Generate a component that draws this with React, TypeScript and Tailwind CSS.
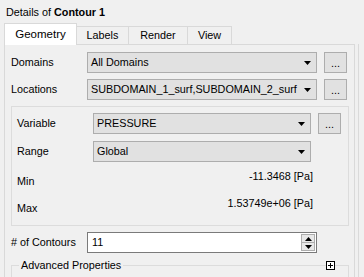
import React from "react";

const Arrow = () => (
  <svg width="7" height="4" viewBox="0 0 7 4" className="block">
    <path d="M0 0H7L3.5 4Z" fill="#000" />
  </svg>
);

function Combo({ text, w }: { text: string; w: string }) {
  return (
    <div
      className={`${w} h-[21px] flex items-center justify-between border border-[#adadad] bg-[#e1e1e1] pl-[3px] pr-[5px]`}
    >
      <span className="whitespace-nowrap">{text}</span>
      <Arrow />
    </div>
  );
}

function Dots() {
  return (
    <div className="w-[23px] h-[21px] border border-[#adadad] bg-[#e1e1e1] flex items-end justify-center pb-[3px] leading-none">
      ...
    </div>
  );
}

export default function App() {
  return (
    <div className="w-[364px] h-[277px] overflow-hidden bg-[#f0f0f0] text-black font-['Liberation_Sans',Arial,sans-serif] text-[10.8px] leading-[13px]">
      {/* title */}
      <div className="h-[23px] flex items-center pl-[6px] pt-[1px]">
        <span>Details of&nbsp;</span>
        <span className="font-bold">Contour 1</span>
      </div>
      {/* tabs */}
      <div className="h-[21px] flex items-end pl-[4px]">
        <div className="relative z-10 -mb-px h-[22px] w-[73px] bg-white border-l border-t border-r border-[#d9d9d9] flex items-center justify-center text-[11.5px]">
          Geometry
        </div>
        <div className="h-[18px] w-[52px] border-t border-r border-[#d9d9d9] flex items-center justify-center">
          Labels
        </div>
        <div className="h-[18px] w-[59px] border-t border-r border-[#d9d9d9] flex items-center justify-center">
          Render
        </div>
        <div className="h-[18px] w-[44px] border-t border-r border-[#d9d9d9] flex items-center justify-center">
          View
        </div>
      </div>
      <div className="flex pl-[4px]">
        {/* panel */}
        <div className="w-[351px] h-[240px] border border-[#d9d9d9] pt-[7px] pl-[6px] flex flex-col">
          <div className="flex items-center h-[21px]">
            <div className="w-[76px]">Domains</div>
            <Combo text="All Domains" w="w-[230px]" />
            <div className="ml-[7px]">
              <Dots />
            </div>
          </div>
          <div className="flex items-center h-[21px] mt-[6px]">
            <div className="w-[76px]">Locations</div>
            <Combo text="SUBDOMAIN_1_surf,SUBDOMAIN_2_surf" w="w-[230px]" />
            <div className="ml-[7px]">
              <Dots />
            </div>
          </div>
          {/* group box */}
          <div className="mt-[6px] w-[338px] h-[120px] border border-[#dcdcdc] pl-[5px] pt-[6px] flex flex-col">
            <div className="flex items-center h-[21px]">
              <div className="w-[76px]">Variable</div>
              <Combo text="PRESSURE" w="w-[218px]" />
              <div className="ml-[7px]">
                <Dots />
              </div>
            </div>
            <div className="flex items-center h-[21px] mt-[7px]">
              <div className="w-[76px]">Range</div>
              <Combo text="Global" w="w-[218px]" />
            </div>
            <div className="flex justify-between h-[18px] mt-[8px] w-[296px]">
              <div className="self-end">Min</div>
              <div className="self-start">-11.3468 [Pa]</div>
            </div>
            <div className="flex justify-between h-[18px] mt-[9px] w-[296px]">
              <div className="self-end">Max</div>
              <div className="self-start">1.53749e+06 [Pa]</div>
            </div>
          </div>
          {/* # of contours */}
          <div className="flex items-center h-[21px] mt-[6px]">
            <div className="w-[76px]"># of Contours</div>
            <div className="w-[230px] h-[21px] border border-[#7a7a7a] bg-white flex items-center justify-between pl-[4px] pr-[1px]">
              <span>11</span>
              <div className="w-[14px] h-[17px] flex flex-col border border-[#adadad] bg-[#e8e8e8]">
                <div className="flex-1 flex items-center justify-center border-b border-[#adadad]">
                  <svg width="7" height="4" viewBox="0 0 7 4" className="block">
                    <path d="M0 4H7L3.5 0Z" fill="#000" />
                  </svg>
                </div>
                <div className="flex-1 flex items-center justify-center">
                  <Arrow />
                </div>
              </div>
            </div>
          </div>
          {/* advanced properties */}
          <div className="relative mt-[12px] w-[338px] flex-1 border-t border-l border-r border-[#dcdcdc]">
            <div className="absolute -top-[7px] left-[7px] bg-[#f0f0f0] px-[2px] leading-[13px]">
              Advanced Properties
            </div>
            <div className="absolute -top-[5px] right-[13px] w-[9px] h-[9px] border border-black bg-white flex items-center justify-center">
              <svg width="7" height="7" viewBox="0 0 7 7" className="block">
                <path d="M1 3.5H6M3.5 1V6" stroke="#000" strokeWidth="1" />
              </svg>
            </div>
          </div>
        </div>
        <div className="ml-[3px] w-px h-[240px] bg-[#dadada]" />
      </div>
    </div>
  );
}
